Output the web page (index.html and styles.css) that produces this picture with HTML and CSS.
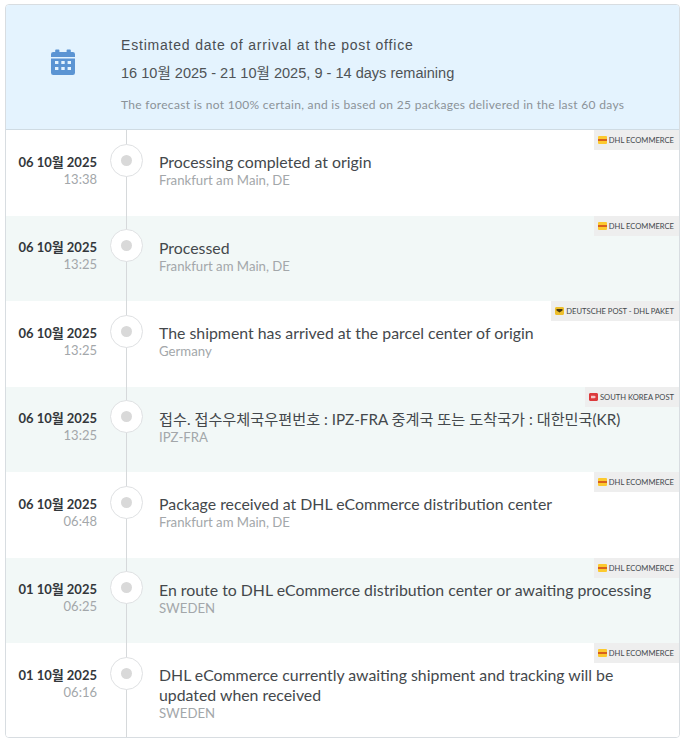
FILE: index.html
```html
<!DOCTYPE html>
<html>
    <head>
        <link rel="stylesheet" href="styles.css">
    </head>
    <body>
        <div class="card">
            <div class="forecast">
                <div class="forecast-icon">
                    <svg width="24" height="26" viewBox="0 0 24 26">
                        <path fill="#5b94d3" d="M5 0.5h2.6a.8.8 0 0 1 .8.8V3h7.2V1.3a.8.8 0 0 1 .8-.8H19a.8.8 0 0 1 .8.8V3h2A2.2 2.2 0 0 1 24 5.2V8H0V5.2A2.2 2.2 0 0 1 2.200 3h2V1.300a.8.8 0 0 1 .8-.8z"/>
                        <path fill="#5b94d3" fill-rule="evenodd" d="M0 9.500h24v14.300a2.200 2.200 0 0 1-2.200 2.200H2.200A2.200 2.200 0 0 1 0 23.800zM4 12v3h3.400v-3zM10.300 12v3h3.400v-3zM16.600 12v3H20v-3zM4 18v3h3.400v-3zM10.300 18v3h3.400v-3zM16.600 18v3H20v-3z"/>
                    </svg>
                </div>
                <div class="forecast-text">
                    <div class="forecast-title">Estimated date of arrival at the post office</div>
                    <div class="forecast-dates">16 10월 2025 - 21 10월 2025, 9 - 14 days remaining</div>
                    <div class="forecast-note">The forecast is not 100% certain, and is based on 25 packages delivered in the last 60 days</div>
                </div>
            </div>

            <div class="event">
                <div class="when"><div class="date">06 10월 2025</div><div class="time">13:38</div></div>
                <div class="dot"></div>
                <div class="what">
                    <div class="title">Processing completed at origin</div>
                    <div class="place">Frankfurt am Main, DE</div>
                </div>
                <div class="carrier"><span class="logo logo-dhl"></span>DHL ECOMMERCE</div>
            </div>

            <div class="event alt">
                <div class="when"><div class="date">06 10월 2025</div><div class="time">13:25</div></div>
                <div class="dot"></div>
                <div class="what">
                    <div class="title">Processed</div>
                    <div class="place">Frankfurt am Main, DE</div>
                </div>
                <div class="carrier"><span class="logo logo-dhl"></span>DHL ECOMMERCE</div>
            </div>

            <div class="event">
                <div class="when"><div class="date">06 10월 2025</div><div class="time">13:25</div></div>
                <div class="dot"></div>
                <div class="what">
                    <div class="title">The shipment has arrived at the parcel center of origin</div>
                    <div class="place">Germany</div>
                </div>
                <div class="carrier">
                    <svg class="logo" viewBox="0 0 9 8"><rect width="9" height="8" rx="1" fill="#eebf2c"/><path fill="#4a3b10" d="M1.500 2h6v1.600l-3 2-3-2z"/></svg>DEUTSCHE POST - DHL PAKET
                </div>
            </div>

            <div class="event alt">
                <div class="when"><div class="date">06 10월 2025</div><div class="time">13:25</div></div>
                <div class="dot"></div>
                <div class="what">
                    <div class="title title-kr">접수. 접수우체국우편번호 : IPZ-FRA 중계국 또는 도착국가 : 대한민국(KR)</div>
                    <div class="place">IPZ-FRA</div>
                </div>
                <div class="carrier">
                    <svg class="logo" viewBox="0 0 9 8"><rect width="9" height="8" rx="1" fill="#dc3a3c"/><path fill="#f6c6c6" d="M2 2.800h3.500l1.500 1.200-1.500 1.200H2z"/></svg>SOUTH KOREA POST
                </div>
            </div>

            <div class="event">
                <div class="when"><div class="date">06 10월 2025</div><div class="time">06:48</div></div>
                <div class="dot"></div>
                <div class="what">
                    <div class="title">Package received at DHL eCommerce distribution center</div>
                    <div class="place">Frankfurt am Main, DE</div>
                </div>
                <div class="carrier"><span class="logo logo-dhl"></span>DHL ECOMMERCE</div>
            </div>

            <div class="event alt">
                <div class="when"><div class="date">01 10월 2025</div><div class="time">06:25</div></div>
                <div class="dot"></div>
                <div class="what">
                    <div class="title">En route to DHL eCommerce distribution center or awaiting processing</div>
                    <div class="place">SWEDEN</div>
                </div>
                <div class="carrier"><span class="logo logo-dhl"></span>DHL ECOMMERCE</div>
            </div>

            <div class="event last">
                <div class="when"><div class="date">01 10월 2025</div><div class="time">06:16</div></div>
                <div class="dot"></div>
                <div class="what">
                    <div class="title">DHL eCommerce currently awaiting shipment and tracking will be updated when received</div>
                    <div class="place">SWEDEN</div>
                </div>
                <div class="carrier"><span class="logo logo-dhl"></span>DHL ECOMMERCE</div>
            </div>
        </div>
    </body>
</html>
```

FILE: styles.css
```css
body{
    margin:0;
    padding:4px 5px 0 5px;
    background:#fff;
    font-family:"Lato","Noto Sans CJK KR",sans-serif;
}
.card{
    width:675px;
    box-sizing:border-box;
    border:1px solid #d8dde1;
    border-radius:4px;
    overflow:hidden;
}
.forecast{
    height:125px;
    box-sizing:border-box;
    display:flex;
    background:#e4f3fe;
    border-bottom:1px solid #cfdbe3;
}
.forecast-icon{
    width:115px;
    padding:44px 0 0 45px;
    box-sizing:border-box;
}
.forecast-text{
    padding-top:31px;
}
.forecast-title{
    font-family:"Liberation Sans","Noto Sans CJK KR",sans-serif;
    font-size:14px;
    line-height:18px;
    letter-spacing:.8px;
    color:#4a4e52;
}
.forecast-dates{
    font-family:"Liberation Sans","Noto Sans CJK KR",sans-serif;
    font-size:14.550px;
    line-height:18px;
    margin-top:10px;
    color:#4f5357;
}
.forecast-note{
    font-size:12px;
    line-height:16px;
    margin-top:15px;
    letter-spacing:.31px;
    color:#8b9298;
}
.event{
    position:relative;
    height:85.500px;
    display:flex;
    background:#fff;
}
.event.alt{
    background:#f2f8f7;
}
.event.last{
    height:94px;
}
.event:before{
    content:"";
    position:absolute;
    left:120px;
    top:0;
    bottom:0;
    width:1px;
    background:#d6d9db;
}
.when{
    width:91px;
    padding-top:23.500px;
    text-align:right;
}
.date{
    font-size:13px;
    line-height:17px;
    font-weight:bold;
    color:#33373b;
}
.time{
    font-size:13px;
    line-height:17px;
    color:#a3a7aa;
}
.dot{
    position:relative;
    box-sizing:border-box;
    width:33px;
    height:33px;
    margin:13.500px 0 0 13px;
    border:1px solid #dfe1e3;
    border-radius:50%;
    background:#fff;
}
.dot:after{
    content:"";
    position:absolute;
    left:10px;
    top:10px;
    width:11px;
    height:11px;
    border-radius:50%;
    background:#d9d9d9;
}
.what{
    margin-left:16px;
    padding-top:22px;
    width:495px;
}
.title{
    font-size:15.850px;
    line-height:20px;
    color:#44484c;
}
.title-kr{
    font-size:15.200px;
}
.place{
    font-size:13.200px;
    line-height:16px;
    color:#a3a7aa;
}
.carrier{
    position:absolute;
    right:0;
    top:0;
    height:20px;
    padding:0 5px 0 4px;
    display:flex;
    align-items:center;
    background:#eeeeee;
    font-size:7.600px;
    color:#44484c;
}
.logo{
    width:9px;
    height:8px;
    margin-right:2px;
    border-radius:1px;
}
.logo-dhl{
    background:linear-gradient(#fcc92e 0 42%,#d8601c 42% 58%,#fcc92e 58%);
}
```
